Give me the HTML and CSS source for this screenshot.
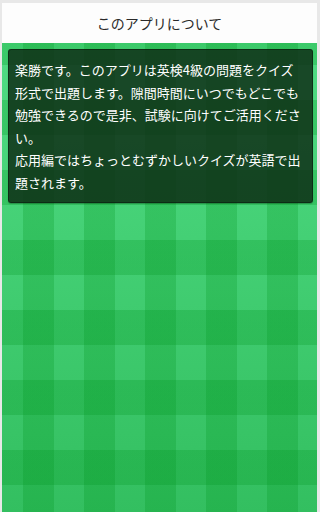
FILE: index.html
```html
<!DOCTYPE html>
<html lang="ja">
<head>
<meta charset="utf-8">
<meta name="viewport" content="width=device-width, initial-scale=1">
<title>このアプリについて</title>
<link rel="stylesheet" href="styles.css">
</head>
<body>
<div class="app">
  <header class="bar">
    <h1 class="bar-title">このアプリについて</h1>
  </header>
  <main class="board">
    <section class="card">
      <p class="card-text">楽勝です。このアプリは英検4級の問題をクイズ形式で出題します。隙間時間にいつでもどこでも勉強できるので是非、試験に向けてご活用ください。<br>応用編ではちょっとむずかしいクイズが英語で出題されます。</p>
    </section>
  </main>
</div>
</body>
</html>
```

FILE: styles.css
```css
html, body {
  margin: 0;
  padding: 0;
  height: 100%;
}
body {
  background: #e8e8e8;
  padding: 3px 3px 0 2px;
  box-sizing: border-box;
  font-family: "Noto Sans CJK JP", "Noto Sans", sans-serif;
  overflow: hidden;
}
.app {
  display: flex;
  flex-direction: column;
  height: 100%;
}
.bar {
  height: 40px;
  flex: none;
  background: #fdfdfd;
  display: flex;
  align-items: center;
  justify-content: center;
}
.bar-title {
  margin: 0;
  font-size: 14px;
  font-weight: 400;
  color: #2a2a2a;
  white-space: nowrap;
}
.board {
  flex: 1;
  padding: 6px 4px 0 6px;
  background-color: #46d27a;
  background-image:
    repeating-linear-gradient(90deg, transparent 0 21px, rgba(0,148,30,0.25) 21px 51.5px, transparent 51.5px 61px),
    repeating-linear-gradient(180deg, rgba(0,148,30,0.25) 0 22px, transparent 22px 57px, rgba(0,148,30,0.25) 57px 70px),
    linear-gradient(180deg, #50dc84 0%, #33bf60 100%);
}
.card {
  background: rgba(14, 44, 22, 0.84);
  border: 1px solid rgba(8, 30, 14, 0.6);
  border-radius: 3px;
  padding: 9px 6px 8px 6px;
  box-shadow: 0 1px 1px rgba(0,0,0,0.25);
}
.card-text {
  margin: 0;
  font-size: 13px;
  line-height: 22.5px;
  color: #ffffff;
  line-break: strict;
}
```
